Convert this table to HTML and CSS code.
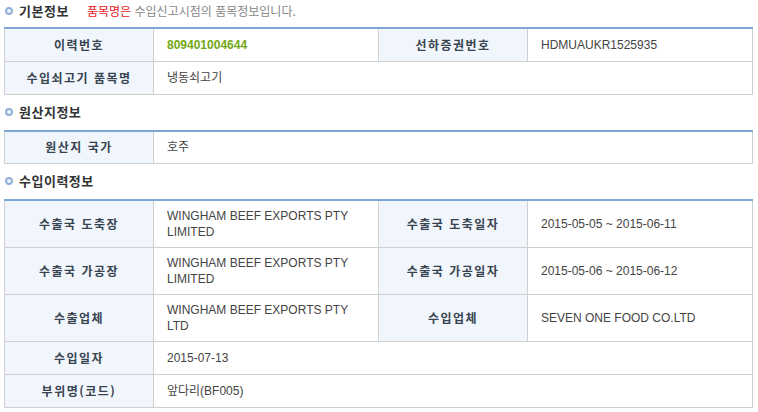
FILE: index.html
```html
<!DOCTYPE html>
<html lang="ko">
<head>
    <meta charset="UTF-8">
    <title>수입쇠고기 이력정보</title>
    <link rel="stylesheet" href="styles.css">
</head>
<body>

<div class="wrap">
    <h3 class="tit first"><span class="dot"></span>기본정보 <span class="note"><em>품목명은</em> 수입신고시점의 품목정보입니다.</span></h3>
    <table class="info">
        <colgroup>
            <col class="c-th"><col class="c-td"><col class="c-th"><col class="c-td">
        </colgroup>
        <tr class="r1">
            <th>이력번호</th>
            <td class="num">809401004644</td>
            <th>선하증권번호</th>
            <td>HDMUAUKR1525935</td>
        </tr>
        <tr class="r1">
            <th>수입쇠고기 품목명</th>
            <td colspan="3">냉동쇠고기</td>
        </tr>
    </table>

    <h3 class="tit"><span class="dot"></span>원산지정보</h3>
    <table class="info">
        <colgroup>
            <col class="c-th"><col class="c-td"><col class="c-th"><col class="c-td">
        </colgroup>
        <tr class="r1">
            <th>원산지 국가</th>
            <td colspan="3">호주</td>
        </tr>
    </table>

    <h3 class="tit"><span class="dot"></span>수입이력정보</h3>
    <table class="info">
        <colgroup>
            <col class="c-th"><col class="c-td"><col class="c-th"><col class="c-td">
        </colgroup>
        <tr class="r2">
            <th>수출국 도축장</th>
            <td>WINGHAM BEEF EXPORTS PTY LIMITED</td>
            <th>수출국 도축일자</th>
            <td>2015-05-05 ~ 2015-06-11</td>
        </tr>
        <tr class="r2">
            <th>수출국 가공장</th>
            <td>WINGHAM BEEF EXPORTS PTY LIMITED</td>
            <th>수출국 가공일자</th>
            <td>2015-05-06 ~ 2015-06-12</td>
        </tr>
        <tr class="r2">
            <th>수출업체</th>
            <td>WINGHAM BEEF EXPORTS PTY LTD</td>
            <th>수입업체</th>
            <td>SEVEN ONE FOOD CO.LTD</td>
        </tr>
        <tr class="r1">
            <th>수입일자</th>
            <td colspan="3">2015-07-13</td>
        </tr>
        <tr class="r1">
            <th>부위명(코드)</th>
            <td colspan="3">앞다리(BF005)</td>
        </tr>
    </table>
</div>

</body>
</html>
```

FILE: styles.css
```css
body {
    margin: 0;
    background: #fff;
    font-family: "Liberation Sans", "Noto Sans CJK KR", sans-serif;
    font-size: 12px;
    color: #444;
}

.wrap {
    padding: 0 4px;
    width: 749px;
}

.tit {
    margin: 0;
    padding: 7px 0 8px 1px;
    font-size: 13px;
    line-height: 20px;
    font-weight: bold;
    color: #333;
    letter-spacing: 0.5px;
    font-family: "Noto Sans CJK KR", sans-serif;
}

.tit.first {
    padding: 1px 0 6px 1px;
}

.dot {
    display: inline-block;
    width: 4px;
    height: 4px;
    margin-right: 6px;
    vertical-align: 1px;
    border: 2px solid #8fb1d9;
    border-radius: 50%;
    background: #eef4fb;
}

.note {
    margin-left: 14px;
    font-size: 12px;
    font-weight: normal;
    letter-spacing: 0;
    color: #888;
}

.note em {
    font-style: normal;
    color: #e8141b;
}

.info {
    width: 749px;
    border-collapse: collapse;
    table-layout: fixed;
    border-top: 2px solid #7fa6d9;
}

.c-th { width: 149px; }
.c-td { width: 225px; }

.info th,
.info td {
    border: 1px solid #cfcfcf;
    border-top: none;
    line-height: 16px;
}

.info th {
    background: #f1f6fd;
    color: #37434f;
    font-family: "Noto Sans CJK KR", sans-serif;
    font-weight: bold;
    letter-spacing: 1.5px;
    text-align: center;
    padding: 0 4px;
}

.info td {
    padding: 0 8px 0 13px;
    color: #444;
    text-align: left;
}

.r1 { height: 33px; }
.r2 { height: 47px; }

.info td.num {
    color: #72a813;
    font-weight: bold;
}
```
